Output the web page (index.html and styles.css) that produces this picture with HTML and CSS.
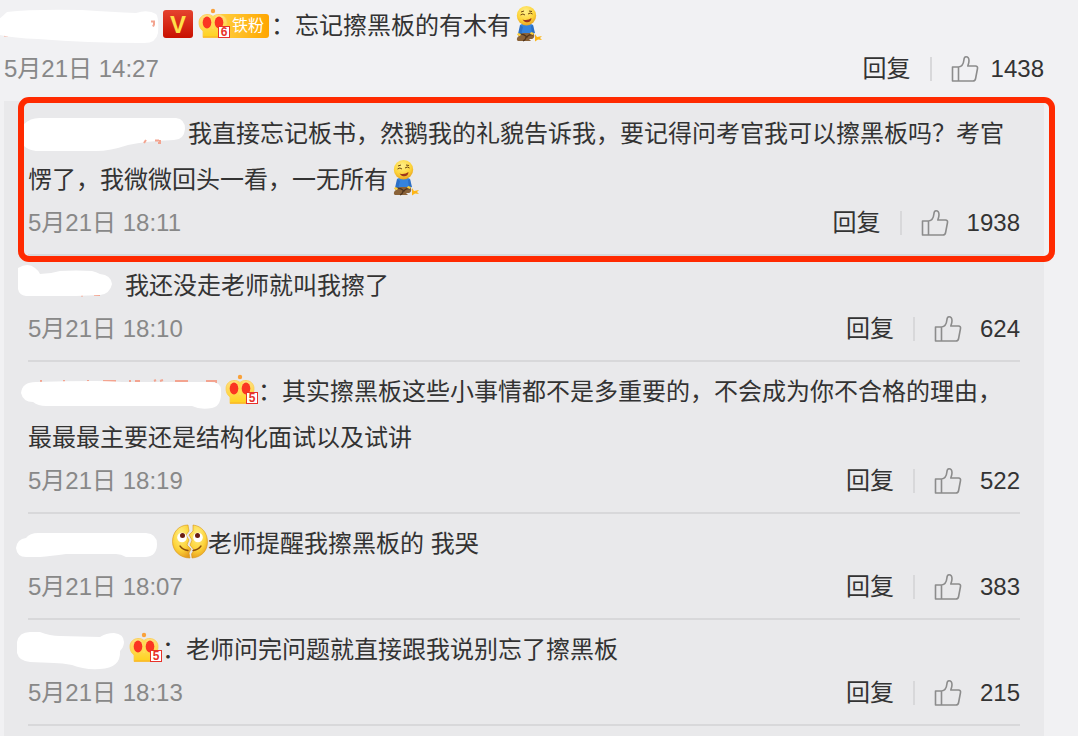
FILE: index.html
```html
<!DOCTYPE html>
<html lang="zh-CN">
<head>
  <meta charset="UTF-8">
  <meta name="viewport" content="width=device-width, initial-scale=1">
  <title>评论</title>
  <link rel="stylesheet" href="styles.css">
</head>
<body>

  <!-- Iconos compartidos -->
  <svg class="sprite" aria-hidden="true">
    <defs>
      <linearGradient id="gold" x1="0" y1="0" x2="0" y2="1">
        <stop offset="0" stop-color="#ffdf80"/>
        <stop offset="1" stop-color="#ffd21c"/>
      </linearGradient>
      <radialGradient id="face" cx="0.45" cy="0.3" r="0.75">
        <stop offset="0" stop-color="#fff08a"/>
        <stop offset="0.6" stop-color="#fdd43a"/>
        <stop offset="1" stop-color="#e59a1c"/>
      </radialGradient>
    </defs>
    <symbol id="thumb" viewBox="0 0 28 28">
      <path d="M1.500 12h6v14h-6zM7.500 12c3.500-.5 5-3 5.300-6.500C13 3 13.500 1.800 15 1.800c2 0 3 1.700 3 4 0 2-.6 3.500-1.200 5.200h7.700c1.600 0 2.300 1 2 2.500l-1.900 10c-.3 1.700-1.200 2.500-2.700 2.500H7.500" fill="none" stroke="#8c8c8c" stroke-width="1.600" stroke-linejoin="round"/>
    </symbol>
    <symbol id="crown" viewBox="0 0 36 30">
      <circle cx="18" cy="3" r="2.200" fill="#f9a13a"/>
      <path d="M8 29.500V23C5 21 4 17.500 4 14.500 4 9.500 8 6.500 12 6.500c2.500 0 4.500.5 6 2 1.500-1.500 3.500-2 6-2 4 0 8 3 8 8 0 3-1 6.500-4 8.500v6.500z" fill="url(#gold)" stroke="#fccb4e" stroke-width=".8"/>
      <path d="M8 29h20" stroke="#f9b52a" stroke-width="1.200"/>
      <ellipse cx="12" cy="14.500" rx="4.300" ry="6" fill="#fb3522"/>
      <ellipse cx="24" cy="14.500" rx="4.300" ry="6" fill="#fb3522"/>
      <path d="M14.500 8c2 1 2.500 3 2.500 6v7h2v-7c0-3 .5-5 2.500-6-1.500-.2-2.600.3-3.500 1.200-.9-.9-2-1.400-3.500-1.200z" fill="#ffdc50"/>
    </symbol>
    <symbol id="kneel" viewBox="0 0 36 36">
      <path d="M9 19c3-2 10-2 13 0l1 9H9z" fill="#3583dc"/>
      <path d="M9 19l-2 9 3 1 2-8zM20 20l1 8 3-1-2-8z" fill="#2b6fc6"/>
      <path d="M12 27h9c3 0 3 5 0 6h-3l2 2H7c-2-1-1-4 1-5z" fill="#8a6238"/>
      <path d="M7 29c4-2 7 0 9 2 1-2 4-3 6-2M12 35c2-1 3-2 3-4" fill="none" stroke="#50351d" stroke-width="1.300"/>
      <path d="M7 27l3 1-1 2-3-1zM20 26l3 1-1 2-3-1z" fill="#ffd03a"/>
      <circle cx="15.500" cy="9.700" r="9.700" fill="url(#face)"/>
      <path d="M9.500 9q2.500-2 4.500 0M17 8q2.500-2 4.500 0M10 6l3-1M18 5l3 .5" fill="none" stroke="#704713" stroke-width="1"/>
      <path d="M11.500 13.500q5 1.500 9-1.500c0 5-6 6-9 1.500z" fill="#9e371c"/>
      <path d="M24 28l2 3 5-1-2 2 2 2-4-.5-3 2v-3z" fill="#fdb515"/>
    </symbol>
    <symbol id="split" viewBox="0 0 36 36">
      <path d="M16 1C7 1 .5 8 .5 17.500.5 27 8 34 18 34l-1-5 2-4-4-4 2-5-3-5 3-4z" fill="url(#face)" stroke="#d99516" stroke-width=".6"/>
      <path d="M21 1c9 1 14.500 8 14.500 17C35.500 27 29 33.500 20 34l-.5-4 2.500-4-4-5 2-5-3-5 4-4z" fill="url(#face)" stroke="#d99516" stroke-width=".6"/>
      <circle cx="10" cy="13.500" r="4.800" fill="#fff"/>
      <circle cx="26" cy="13.500" r="4.800" fill="#fff"/>
      <circle cx="10.500" cy="11.500" r="2.500" fill="#6a1c12"/>
      <circle cx="25.500" cy="11.500" r="2.500" fill="#6a1c12"/>
      <path d="M8 22q3 4 8 4.500M21 26.500q5-.5 8-4.500" fill="none" stroke="#8a4a0c" stroke-width="1.300" stroke-linecap="round"/>
    </symbol>
  </svg>

  <main class="thread">

    <article class="comment main-comment">
      <p class="text"><span class="name name-main"><svg class="cover" viewBox="0 0 220 46" aria-hidden="true"><path class="ink" d="M12 32.500h4"/><path d="M15 9Q40 6 90 7Q120 9 144 10Q156 6 164 11Q167 14 166 30Q164 41 150 40Q95 40 46 36Q18 35 4 31V18Q9 15 15 9Z"/><path class="ink" d="M159 18.500h3v3l-1 2"/></svg></span><span class="vip">V</span><span class="fan"><svg class="crown" aria-hidden="true"><use href="#crown"/></svg><span class="fan-label">铁粉</span><span class="level">6</span></span>：忘记擦黑板的有木有<svg class="emoji" role="img" aria-label="跪了"><use href="#kneel"/></svg></p>
      <div class="meta">
        <time>5月21日 14:27</time>
        <div class="actions">
          <button class="reply-btn" type="button">回复</button>
          <button class="like" type="button"><svg class="thumb" aria-hidden="true"><use href="#thumb"/></svg>1438</button>
        </div>
      </div>
    </article>

    <section class="replies">

      <article class="comment reply marked">
        <p class="text"><span class="name name-1"><svg class="cover" viewBox="0 0 220 46" aria-hidden="true"><path d="M8 13Q15 6 26 7H160Q169 8 169 18Q168 29 158 29Q130 30 112 34Q94 40 80 40H20Q12 39 8 35Z"/><path class="ink" d="M130 29l-2 3M139 29.500h4M144 29v3h-2"/></svg></span>我直接忘记板书，然鹅我的礼貌告诉我，要记得问考官我可以擦黑板吗？考官愣了，我微微回头一看，一无所有<svg class="emoji" role="img" aria-label="跪了"><use href="#kneel"/></svg></p>
        <div class="meta">
          <time>5月21日 18:11</time>
          <div class="actions">
            <button class="reply-btn" type="button">回复</button>
            <button class="like" type="button"><svg class="thumb" aria-hidden="true"><use href="#thumb"/></svg>1938</button>
          </div>
        </div>
      </article>

      <article class="comment reply">
        <p class="text"><span class="name name-2"><svg class="cover" viewBox="0 0 220 46" aria-hidden="true"><path class="ink" d="M65 32.500h2M78 32h6"/><path d="M2 5Q12-1 19 5Q23 8 24 11Q34 11 44 8Q60 7 76 8Q80 9 84 11Q95 12 96 21Q94 31 84 32L60 33H10Q3 32 2 26Z"/></svg></span>我还没走老师就叫我擦了</p>
        <div class="meta">
          <time>5月21日 18:10</time>
          <div class="actions">
            <button class="reply-btn" type="button">回复</button>
            <button class="like" type="button"><svg class="thumb" aria-hidden="true"><use href="#thumb"/></svg>624</button>
          </div>
        </div>
      </article>

      <article class="comment reply">
        <p class="text"><span class="name name-3"><svg class="cover" viewBox="0 0 220 46" aria-hidden="true"><path class="ink" d="M24 12h2M47 12h2M71 12h2M87 12h13M113 12h2M119 12h5M138 12l2-1M144 12l3-1M159 12h13M190 12h10v2"/><path d="M5 24Q6 13 20 13Q50 12 80 12Q90 12 106 13H192Q205 12 205 21Q206 37 196 39Q184 41 176 37H30Q22 37 17 33Q7 33 5 24Z"/></svg></span><span class="badge"><svg class="crown" aria-hidden="true"><use href="#crown"/></svg><span class="level">5</span></span>：其实擦黑板这些小事情都不是多重要的，不会成为你不合格的理由，最最最主要还是结构化面试以及试讲</p>
        <div class="meta">
          <time>5月21日 18:19</time>
          <div class="actions">
            <button class="reply-btn" type="button">回复</button>
            <button class="like" type="button"><svg class="thumb" aria-hidden="true"><use href="#thumb"/></svg>522</button>
          </div>
        </div>
      </article>

      <article class="comment reply">
        <p class="text"><span class="name name-4"><svg class="cover" viewBox="0 0 220 46" aria-hidden="true"><path d="M0 27Q1 18 10 17Q14 12 22 12H130Q141 13 141 23Q141 35 130 36H110Q105 33 100 33H50Q35 35 24 36H10Q1 36 0 27Z"/></svg></span><svg class="emoji" role="img" aria-label="裂开"><use href="#split"/></svg>老师提醒我擦黑板的 我哭</p>
        <div class="meta">
          <time>5月21日 18:07</time>
          <div class="actions">
            <button class="reply-btn" type="button">回复</button>
            <button class="like" type="button"><svg class="thumb" aria-hidden="true"><use href="#thumb"/></svg>383</button>
          </div>
        </div>
      </article>

      <article class="comment reply">
        <p class="text"><span class="name name-5"><svg class="cover" viewBox="0 0 220 46" aria-hidden="true"><path d="M1 15Q3 5 14 5H24Q34 9 44 9L84 10Q90 6 98 6Q108 7 108 15Q108 20 104 24Q105 41 84 42Q68 43 56 38Q46 36 38 36L14 35Q3 34 1 26Z"/></svg></span><span class="badge"><svg class="crown" aria-hidden="true"><use href="#crown"/></svg><span class="level">5</span></span>：老师问完问题就直接跟我说别忘了擦黑板</p>
        <div class="meta">
          <time>5月21日 18:13</time>
          <div class="actions">
            <button class="reply-btn" type="button">回复</button>
            <button class="like" type="button"><svg class="thumb" aria-hidden="true"><use href="#thumb"/></svg>215</button>
          </div>
        </div>
      </article>

    </section>
  </main>

</body>
</html>
```
FILE: styles.css
```css
* {
  box-sizing: border-box;
}
body {
  margin: 0;
  background-color: #f1f1f3;
  color: #333;
  font-family: "Liberation Sans", "Noto Sans CJK SC", sans-serif;
  font-size: 24px;
}
.sprite {
  position: absolute;
  width: 0;
  height: 0;
}
.thread {
  display: flex;
  flex-direction: column;
  min-height: 100vh;
  padding: 3px 34px 0 4px;
}
.main-comment {
  padding-bottom: 12px;
}
.replies {
  flex: 1;
  padding: 3px 24px 0;
  background-color: #e9e9eb;
}
.reply {
  position: relative;
  padding: 7px 0 11px;
  border-bottom: 2px solid #d8d8da;
}
.text {
  margin: 0;
  line-height: 46px;
}

/* marco rojo sobre la respuesta destacada */
.marked::after {
  content: "";
  position: absolute;
  top: -7px;
  right: -35px;
  bottom: -8px;
  left: -10px;
  border: 6px solid #ff2a00;
  border-radius: 11px;
  pointer-events: none;
}

/* nombres tapados */
.name {
  position: relative;
  display: inline-block;
  height: 46px;
  vertical-align: top;
}
.name-main { width: 159px; }
.name-1 { width: 160px; }
.name-2 { width: 97px; }
.name-3 { width: 194px; }
.name-4 { width: 144px; }
.name-5 { width: 98px; }
.cover {
  position: absolute;
  top: 0;
  left: -12px;
  width: 220px;
  height: 46px;
  overflow: visible;
  fill: #fff;
}
.ink {
  fill: none;
  stroke: #f3a490;
  stroke-width: 2;
}

/* insignias */
.vip {
  display: inline-block;
  width: 30px;
  height: 28px;
  margin: 7px 6px 0 0;
  border-radius: 3px;
  background: linear-gradient(#e5432f, #c81000);
  color: #ffe04a;
  font-size: 24px;
  font-weight: bold;
  line-height: 29px;
  text-align: center;
  vertical-align: top;
}
.fan,
.badge {
  position: relative;
  display: inline-block;
  height: 30px;
  margin-top: 5px;
  vertical-align: top;
}
.fan {
  width: 70px;
  margin-right: 2px;
  padding: 6px 0 0 20px;
}
.badge {
  width: 36px;
}
.crown {
  position: absolute;
  top: 0;
  left: 0;
  width: 36px;
  height: 30px;
}
.fan .crown {
  left: -4px;
}
.fan-label {
  display: block;
  height: 24px;
  padding-left: 13px;
  border-radius: 3px;
  background: linear-gradient(90deg, #ffd040, #ffa600);
  color: #fff;
  font-size: 16px;
  line-height: 24px;
}
.level {
  position: absolute;
  right: 0;
  bottom: 0;
  width: 12px;
  height: 12px;
  border: 1px solid #e8322a;
  background-color: #fff;
  color: #e8322a;
  font-size: 12px;
  font-weight: bold;
  line-height: 11px;
  text-align: center;
}
.fan .level {
  right: 39px;
}
.emoji {
  width: 36px;
  height: 36px;
  vertical-align: -8px;
}

/* fecha y acciones */
.meta {
  display: flex;
  justify-content: space-between;
  align-items: center;
  line-height: 40px;
}
time {
  color: #888;
}
.actions {
  display: flex;
  align-items: center;
}
button {
  padding: 0;
  border: 0;
  background: none;
  color: inherit;
  font: inherit;
  cursor: pointer;
}
.reply-btn {
  display: flex;
  align-items: center;
}
.reply-btn::after {
  content: "";
  width: 2px;
  height: 24px;
  margin: 0 19px;
  background-color: #d8d8da;
}
.like {
  display: flex;
  align-items: center;
  gap: 18px;
}
.main-comment .like {
  gap: 12px;
}
.thumb {
  width: 28px;
  height: 28px;
}
```
